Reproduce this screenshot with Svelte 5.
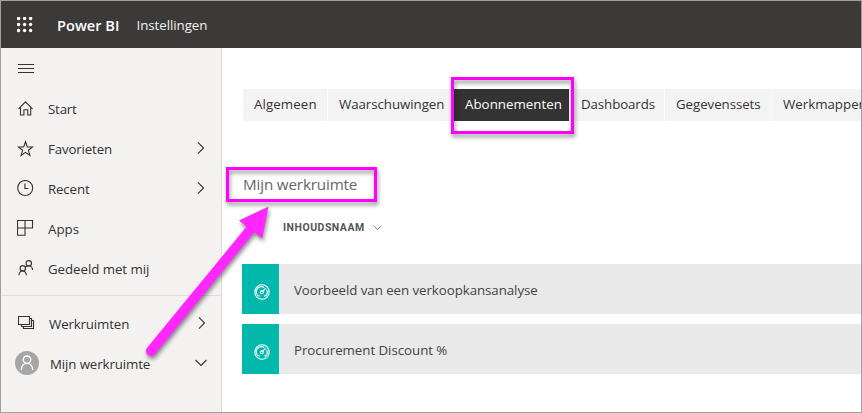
<script>
  const nav = [
    { icon: 'home', label: 'Start', ls: -0.2 },
    { icon: 'star', label: 'Favorieten', chevron: true, ls: -0.15 },
    { icon: 'clock', label: 'Recent', chevron: true, ls: -0.15 },
    { icon: 'apps', label: 'Apps', ls: 0 },
    { icon: 'people', label: 'Gedeeld met mij', ls: -0.06 }
  ];
  const tabs = [
    { label: 'Algemeen', width: 84, ls: 0.1 },
    { label: 'Waarschuwingen', width: 125, ls: -0.06 },
    { label: 'Abonnementen', width: 115, active: true, ls: 0.03 },
    { label: 'Dashboards', width: 94, ls: -0.1 },
    { label: 'Gegevenssets', width: 106, ls: -0.06 },
    { label: 'Werkmappen', width: 104, ls: 0 }
  ];
  const rows = [
    { label: 'Voorbeeld van een verkoopkansanalyse', ls: -0.06 },
    { label: 'Procurement Discount %', ls: -0.04 }
  ];
  const dots = [2, 8, 14];
</script>

{#snippet glyph(name)}
  <svg class="glyph" width="18" height="18" viewBox="0 0 18 18">
    {#if name === 'home'}
      <path d="M1.5 8.8 8.5 1.8 15.5 8.8M3.5 7V15H6.9V9.7H10.7V15H13.7V7" />
    {:else if name === 'star'}
      <path d="M8.5 1.8 10.3 7H15.5L11.4 10.3 12.9 15.4 8.5 12.3 4.1 15.4 5.6 10.3 1.5 7H6.7Z" />
    {:else if name === 'clock'}
      <circle cx="8.2" cy="8" r="7.5" />
      <path d="M7.9 3.5V8.5H11.4" />
    {:else if name === 'apps'}
      <path d="M.5 .5H15.5V8H.5ZM8 .5V15.3H.5V8" />
    {:else if name === 'people'}
      <circle cx="11.8" cy="3.3" r="2.7" />
      <circle cx="5.8" cy="8.3" r="2.7" />
      <path d="M2 15.3C2 12.7 3.6 11 5.7 11S9.2 12.7 9.4 15.3M8.3 7.2C9 6.4 10.3 6 11.8 6 14 6 15.4 7.5 15.6 10" />
    {/if}
  </svg>
{/snippet}

{#snippet chevronRight()}
  <svg class="glyph turn" width="8" height="14" viewBox="0 0 8 14"><path d="M1 1.3 6.5 7 1 12.7" /></svg>
{/snippet}

<div class="window">
  <header>
    <svg class="waffle" width="16" height="16" viewBox="0 0 16 16">
      {#each dots as y}
        {#each dots as x}
          <circle cx={x - 0.4} cy={y - 0.5} r="1.7" />
        {/each}
      {/each}
    </svg>
    <span class="brand">Power BI</span>
    <span class="page">Instellingen</span>
  </header>
  <div class="body">
    <nav>
      <svg class="burger" width="16" height="10" viewBox="0 0 16 10">
        <path d="M0 .5H16M0 4.5H16M0 8.5H16" />
      </svg>
      <div class="links">
        {#each nav as item}
          <div class="link">
            {@render glyph(item.icon)}
            <span style="letter-spacing: {item.ls}px">{item.label}</span>
            {#if item.chevron}{@render chevronRight()}{/if}
          </div>
        {/each}
      </div>
      <div class="spaces">
        <div class="link workspaces">
          <svg class="glyph" width="18" height="18" viewBox="0 0 18 18">
            <path d="M.5 1.5H11.5V9.5H.5ZM3.5 9.5V11.5H13.5V3.5H11.5M5.5 11.5V13.5H15.5V5.5H13.5" />
          </svg>
          <span>Werkruimten</span>
          {@render chevronRight()}
        </div>
        <div class="link mine">
          <svg class="avatar" width="24" height="24" viewBox="0 0 24 24">
            <circle class="disc" cx="12" cy="12" r="12" />
            <circle cx="12" cy="8.7" r="3.7" />
            <path d="M6.3 19C6.4 15.2 8.6 12.4 12 12.4S17.6 15.2 17.7 19" />
          </svg>
          <span>Mijn werkruimte</span>
          <svg class="glyph turn" width="12" height="8" viewBox="0 0 12 8"><path d="M.5 1 6 6.5 11.5 1" /></svg>
        </div>
      </div>
    </nav>
    <main>
      <div class="tabs">
        {#each tabs as tab}
          <div class="tab" class:active={tab.active} style="width: {tab.width}px; letter-spacing: {tab.ls}px">{tab.label}</div>
        {/each}
      </div>
      <h1>Mijn werkruimte</h1>
      <div class="column">
        <span>INHOUDSNAAM</span>
        <svg width="9" height="6" viewBox="0 0 9 6"><path d="M.7 .8 4.5 4.6 8.3 .8" /></svg>
      </div>
      <div class="rows">
        {#each rows as row}
          <div class="row">
            <div class="tile">
              <svg width="16" height="16" viewBox="0 0 16 16">
                <circle cx="8" cy="8" r="7.2" />
                <path d="M4.5 12A5 5 0 0 1 10.2 3.5M12.5 5.8A5 5 0 0 1 11.5 12M8.5 7.5 11.8 4.2M4.8 12H6M10 12H11.3" />
                <circle cx="7.8" cy="8.3" r="1.4" />
              </svg>
            </div>
            <span style="letter-spacing: {row.ls}px">{row.label}</span>
          </div>
        {/each}
      </div>
    </main>
  </div>
  <svg class="marks" width="862" height="413" viewBox="0 0 862 413">
    <rect x="452.5" y="78.5" width="120" height="54" />
    <rect x="227.5" y="168.5" width="148" height="32" />
    <path d="M268.5 206.5 262.2 238.5 254.3 232.3 154.9 354.2A5 5 0 0 1 147.1 347.8L246.6 226.6 239 220.5Z" />
  </svg>
</div>

<style>
  .window {
    position: relative;
    box-sizing: border-box;
    width: 862px;
    height: 413px;
    overflow: hidden;
    border: 1px solid #a0a0a0;
    background: #fff;
    color: #333;
    font: 13.3px/20px 'Open Sans', 'Noto Sans', sans-serif;
    display: flex;
    flex-direction: column;
    white-space: nowrap;
  }
  header {
    flex: none;
    height: 47px;
    display: flex;
    align-items: center;
    background: #3b3a39;
    color: #fff;
    padding-left: 16px;
  }
  .waffle { fill: #fff; }
  .brand {
    width: 79px;
    margin-left: 24px;
    font-size: 14.6px;
    font-weight: 600;
  }
  .page { color: #f0f0f0; padding-left: 0.5px; letter-spacing: -0.05px; }
  .body { flex: 1; display: flex; min-height: 0; }
  nav {
    box-sizing: border-box;
    flex: none;
    width: 221px;
    background: #f3f2f1;
    border-right: 1px solid #dcdcdc;
    padding-top: 16px;
  }
  .burger { display: block; margin-left: 17px; }
  .burger path { stroke: #333; }
  .glyph { fill: none; stroke: #333; stroke-width: 1.1; flex: none; }
  .links { padding-top: 15px; height: 206px; }
  .link {
    height: 40px;
    display: flex;
    align-items: center;
    padding: 0 16px 0 16px;
  }
  .link span { flex: 1; margin-left: 13px; padding-bottom: 1px; }
  .turn { margin-bottom: 2px; }
  .spaces { border-top: 1px solid #dcdcdc; padding-top: 8px; }
  .workspaces { padding-left: 17px; padding-right: 15px; }
  .workspaces span { letter-spacing: -0.15px; }
  .mine { padding: 0 14px 0 14px; }
  .mine span { margin-left: 11px; letter-spacing: -0.12px; }
  .avatar { fill: none; stroke: #fff; stroke-width: 1.4; margin-bottom: 2px; }
  .avatar .disc { fill: #a6a6a6; stroke: none; }
  main { flex: 1; min-width: 0; padding: 41px 0 0 20px; }
  .tabs { display: flex; gap: 1px; overflow: hidden; margin-left: 1px; }
  .tab {
    box-sizing: border-box;
    flex: none;
    height: 32px;
    line-height: 30px;
    padding-left: 11px;
    background: #f3f3f3;
  }
  .active { background: #333; color: #fff; }
  h1 {
    margin: 52px 0 0 1px;
    font-size: 15.2px;
    line-height: 22px;
    font-weight: 400;
    letter-spacing: -0.15px;
    color: #666;
  }
  .column {
    height: 16px;
    margin: 25px 0 0 41px;
    display: flex;
    align-items: center;
    gap: 8px;
    color: #555;
    font: 700 10.5px/16px Roboto, sans-serif;
    letter-spacing: 0.5px;
  }
  .column svg { fill: none; stroke: #777; }
  .rows { padding-top: 28px; display: flex; flex-direction: column; gap: 10px; }
  .row { height: 50px; display: flex; align-items: center; background: #e9e9e9; }
  .tile {
    width: 37px;
    height: 50px;
    display: flex;
    align-items: center;
    justify-content: center;
    background: #01b8aa;
  }
  .tile svg { fill: none; stroke: #fff; stroke-width: 1.1; margin: 6px 0 0 2px; }
  .row span { margin-left: 15px; padding-top: 1px; color: #444; }
  .marks { position: absolute; left: -1px; top: -1px; filter: drop-shadow(1px 3px 2px rgba(0, 0, 0, 0.45)); }
  .marks rect { fill: none; stroke: #f0f; stroke-width: 3; }
  .marks path { fill: #ff26ff; }
</style>
